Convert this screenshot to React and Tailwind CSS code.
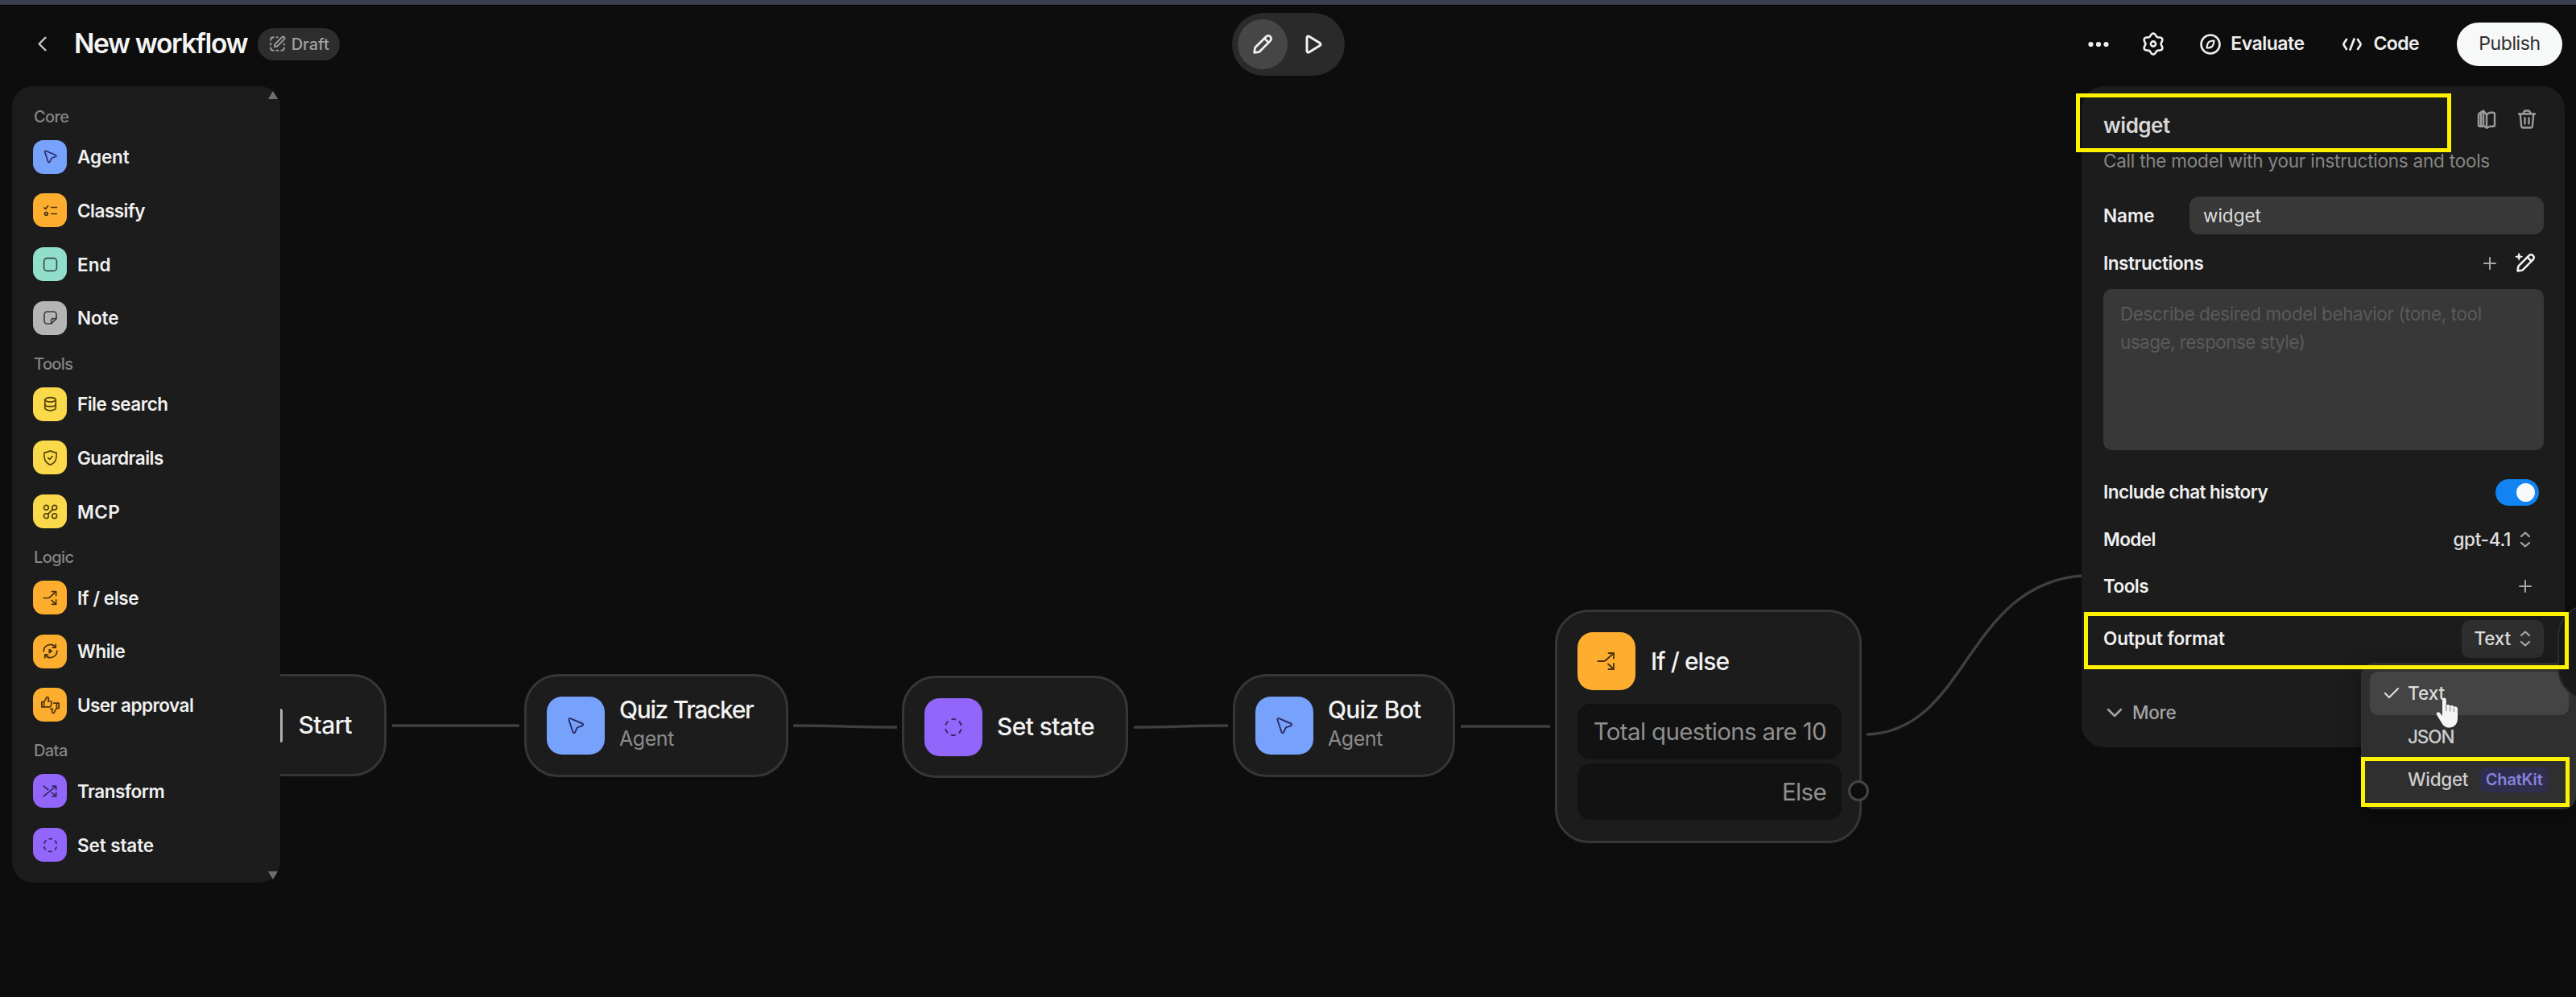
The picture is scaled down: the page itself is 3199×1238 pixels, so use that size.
import React from "react";
import { ChevronLeft, ChevronDown, Check, Plus } from "lucide-react";

const PATHS = {
  agent: <path d="M3.4 4.8c-.3-1.1.8-2.1 1.9-1.6l15 6.3c1.2.5 1.1 2.2-.1 2.6l-5.6 2c-.5.2-1 .6-1.2 1.1l-2.3 5.2c-.5 1.1-2.1 1-2.5-.2z" />,
  classify: (
    <>
      <path d="M2.5 7.5l2 2 4-5" />
      <circle cx="5.5" cy="17" r="2.4" />
      <path d="M13.5 7h8.5M13.5 17h8.5" />
    </>
  ),
  end: <rect x="2" y="2" width="20" height="20" rx="5" />,
  note: (
    <>
      <path d="M13.5 21.500H7A4.500 4.500 0 0 1 2.500 17V7A4.500 4.500 0 0 1 7 2.500h10A4.500 4.500 0 0 1 21.500 7v6.500z" />
      <path d="M13.500 21v-4.500a3 3 0 0 1 3-3h5" />
    </>
  ),
  file: (
    <>
      <ellipse cx="12" cy="5.500" rx="8.500" ry="3.500" />
      <path d="M3.500 5.500v13c0 2 3.500 4 8.500 4s8.500-2 8.500-4v-13" />
      <path d="M3.500 12.500c0 2 3.500 3.500 8.500 3.500s8.500-1.500 8.500-3.500" />
    </>
  ),
  guard: (
    <>
      <path d="M12 1c3 1.800 6 2.400 9.500 3 .8 9-.5 15-9.500 19-9-4-10.300-10-9.500-19C6 3.400 9 2.800 12 1z" />
      <path d="M8.500 12l2.500 2.500 4.500-5" />
    </>
  ),
  mcp: (
    <>
      <circle cx="5.500" cy="5.500" r="3.700" />
      <circle cx="18.500" cy="5.500" r="3.700" />
      <circle cx="5.500" cy="18.500" r="3.700" />
      <circle cx="18.500" cy="18.500" r="3.700" />
      <path d="M8 16l8-8" />
    </>
  ),
  branch: (
    <>
      <path d="M1.500 12h6.500c1.500 0 2.500-.5 3.500-1.500L20.500 2.500" />
      <path d="M14.500 2h6.500v6.500" />
      <path d="M14 15.500l6.500 6M21 15v7h-6.500" />
    </>
  ),
  loop: (
    <>
      <path d="M1.500 12.500a10.500 10.500 0 0 1 18.500-7" />
      <path d="M20.500 1.500v5h-5" />
      <path d="M22.500 11.500a10.500 10.500 0 0 1-18.500 7" />
      <path d="M3.500 22.500v-5h5" />
      <path d="M10.500 9.500l3.500 2.500-3.500 2.500z" fill="currentColor" />
    </>
  ),
  approval: (
    <>
      <path d="M-1.500 7h3.500v8h-3.500zM2 7.500L6.500-.5c2.200-.3 3.200 1.200 2.800 3L8.500 6H12c1.500 0 2.300 1.200 2 2.500l-1 4.700c-.3 1.100-1.100 1.800-2.200 1.800H2" />
      <path d="M25.500 17H22V9h3.500zM22 16.500L17.500 24.500c-2.200.3-3.200-1.200-2.800-3l.8-3.500H12M17.500 9H22" />
    </>
  ),
  transform: (
    <>
      <path d="M1.500 20L20 4.500M15.500 4H21v5.500" />
      <path d="M1.500 4l7 5.500M14.500 14.500l6 5M21 14v6h-6" />
    </>
  ),
  state: <circle cx="12" cy="12" r="10" strokeDasharray="4.470 6" strokeDashoffset="2.230" transform="rotate(-90 12 12)" />,
};

function Glyph({ name, className, sw = 2.1 }) {
  return (
    <svg viewBox="0 0 24 24" fill="none" stroke="currentColor" strokeWidth={sw} strokeLinecap="round" strokeLinejoin="round" className={"overflow-visible " + className}>
      {PATHS[name]}
    </svg>
  );
}

/* Six-lobed gear outline */
const GEAR = Array.from({ length: 72 }, (_, i) => {
  const a = (i / 72) * Math.PI * 2;
  const r = 11.4 + 1.6 * Math.cos(6 * a);
  return `${i ? "L" : "M"}${(13 + r * 0.98 * Math.sin(a)).toFixed(2)} ${(14.5 - r * Math.cos(a)).toFixed(2)}`;
}).join("") + "z";

const SHORT = "tracking-[-0.1px]";
const LONG = "tracking-[-0.5px]";

const GROUPS = [
  {
    title: "Core",
    items: [
      ["Agent", "agent", "bg-[#76a2fc] text-[#2c2a63]", SHORT],
      ["Classify", "classify", "bg-[#fdae2f] text-[#4a330c]", LONG],
      ["End", "end", "bg-[#91dfcb] text-[#3c4a4a]", "tracking-[0.1px]"],
      ["Note", "note", "bg-[#b5b5b5] text-[#3d3d3d]", SHORT],
    ],
  },
  {
    title: "Tools",
    items: [
      ["File search", "file", "bg-[#fada4b] text-[#57430b]", LONG],
      ["Guardrails", "guard", "bg-[#fada4b] text-[#57430b]", LONG],
      ["MCP", "mcp", "bg-[#fada4b] text-[#57430b]", "tracking-[0.4px]"],
    ],
  },
  {
    title: "Logic",
    items: [
      ["If / else", "branch", "bg-[#fdae2f] text-[#4a330c]", "tracking-[-0.4px]"],
      ["While", "loop", "bg-[#fdae2f] text-[#4a330c]", LONG],
      ["User approval", "approval", "bg-[#fdae2f] text-[#4a330c]", "tracking-[-0.55px]"],
    ],
  },
  {
    title: "Data",
    items: [
      ["Transform", "transform", "bg-[#9265fb] text-[#2f2a5c]", LONG],
      ["Set state", "state", "bg-[#9265fb] text-[#2f2a5c]", SHORT],
    ],
  },
];

function Sidebar() {
  return (
    <aside className="relative z-10 h-[989px] w-[333px] rounded-[26px] bg-[#1c1c1c] pt-[14px] pl-[26px]">
      {GROUPS.map((g) => (
        <section key={g.title}>
          <h2 className="flex h-[40.3px] items-center pt-[7px] pl-[1px] text-[20px] font-medium tracking-[-0.6px] text-[#858585]">{g.title}</h2>
          {g.items.map(([label, icon, tone, track]) => (
            <div key={label} className="flex h-[66.7px] items-center gap-[13px]">
              <span className={"flex size-[42px] items-center justify-center rounded-[13px] " + tone}>
                <Glyph name={icon} className="size-[19px]" />
              </span>
              <span className={"pt-[1px] text-[22.5px] font-semibold text-[#f0f0f0] " + track}>{label}</span>
            </div>
          ))}
        </section>
      ))}
      <svg className="absolute top-[6px] right-[3px] h-[10px] w-[12px] fill-[#6d6d6d]" viewBox="0 0 12 10"><path d="M6 0l6 10H0z" /></svg>
      <svg className="absolute right-[3px] bottom-[4px] h-[10px] w-[12px] fill-[#6d6d6d]" viewBox="0 0 12 10"><path d="M6 10l6-10H0z" /></svg>
    </aside>
  );
}

function PencilIcon({ className, sparkle }) {
  return (
    <svg viewBox="0 0 24 24" fill="none" stroke="currentColor" strokeWidth="2.5" strokeLinecap="round" strokeLinejoin="round" className={className}>
      <path d="M2.5 21.5l.6-4.8c.1-.6.4-1.1.8-1.5L16 3.2a3.3 3.3 0 0 1 4.8 4.8L8.8 20.1c-.4.4-.9.7-1.500.8z" />
      <path d="M14 5.200l4.800 4.800" />
      {sparkle && <path d="M4 .5l1 3 3 1-3 1-1 3-1-3-3-1 3-1z" fill="currentColor" strokeWidth="1" />}
    </svg>
  );
}

function Header() {
  return (
    <header className="relative z-10 grid h-[94px] grid-cols-[1fr_auto_1fr] items-center px-[17px] pt-[1px]">
      <div className="ml-[20px] flex items-center">
        <ChevronLeft className="h-[33px] w-[31px] text-[#c9c9c9]" strokeWidth={1.9} />
        <h1 className="ml-[24px] text-[33.5px] font-semibold tracking-[-1.4px] text-[#f4f4f4]">New workflow</h1>
        <span className="ml-[13px] flex h-[40px] w-[102px] items-center justify-center gap-[7px] rounded-full bg-[#2d2d2d] text-[20px] font-medium text-[#a0a0a0]">
          <svg viewBox="0 0 24 24" fill="none" stroke="currentColor" strokeWidth="2.2" strokeLinecap="round" strokeLinejoin="round" className="size-[21px]">
            <path d="M12 2.500h-1M6.500 2.500c-2.500 0-4 1.500-4 4M2.500 11v2M2.500 17.500c0 2.500 1.500 4 4 4M11 21.500h2M17.500 21.500c2.500 0 4-1.500 4-4M21.500 13v-1" />
            <path d="M8 16l.5-3.500L18.500 2.500a2.100 2.100 0 0 1 3 3L11.500 15.500z" />
          </svg>
          Draft
        </span>
      </div>
      <div className="flex h-[78px] w-[140px] items-center rounded-full bg-[#2a2a2a] px-[7px]">
        <span className="flex size-[62px] items-center justify-center rounded-full bg-[#464646] text-[#f2f2f2]"><PencilIcon className="size-[26px]" /></span>
        <span className="flex size-[62px] items-center justify-center text-[#f2f2f2]">
          <svg viewBox="0 0 24 24" fill="none" stroke="currentColor" strokeWidth="3" strokeLinejoin="round" className="ml-[3px] size-[24px]">
            <path d="M4 3.800v16.400c0 1.500 1.500 2.300 2.800 1.500l13.400-8.200c1.200-.7 1.200-2.300 0-3L6.800 2.300C5.500 1.500 4 2.300 4 3.800z" />
          </svg>
        </span>
      </div>
      <div className="flex items-center justify-end text-[23px] font-semibold tracking-[-0.5px] text-[#eee]">
        <svg viewBox="0 0 26 8" className="w-[26px] fill-current"><circle cx="3.500" cy="4" r="3.100" /><circle cx="13" cy="4" r="3.100" /><circle cx="22.500" cy="4" r="3.100" /></svg>
        <svg viewBox="0 0 26 29" fill="none" stroke="currentColor" strokeWidth="2.6" strokeLinejoin="round" className="ml-[42px] h-[29px] w-[26px] overflow-visible">
          <path d={GEAR} />
          <circle cx="13" cy="14.500" r="3.100" />
        </svg>
        <svg viewBox="0 0 26 26" fill="none" stroke="currentColor" strokeWidth="2.6" strokeLinejoin="round" className="ml-[45px] size-[26px]">
          <circle cx="13" cy="13" r="11.500" />
          <path d="M17.500 8.500c-3.600-.1-5.800.7-7 2.200-.9 1.300-1.800 3.500-2 6.800 3.600.1 5.800-.7 7-2.200.9-1.300 1.800-3.500 2-6.800z" strokeWidth="2.200" />
        </svg>
        <span className="ml-[12px]">Evaluate</span>
        <svg viewBox="0 0 26 18" fill="none" stroke="currentColor" strokeWidth="2.7" strokeLinecap="round" strokeLinejoin="round" className="ml-[47px] w-[26px]">
          <path d="M6 3L2.800 7.800c-.5.800-.5 1.600 0 2.400L6 15M20 3l3.200 4.800c.5.800.5 1.600 0 2.400L20 15M15.500 2.500l-5 13" />
        </svg>
        <span className="ml-[13px] tracking-[-0.6px]">Code</span>
        <button className="ml-[47px] flex h-[54px] w-[131px] items-center justify-center rounded-full bg-[#f7f8f8] font-normal tracking-[-0.4px] text-[#2f2f2f]">Publish</button>
      </div>
    </header>
  );
}

/* Workflow canvas: nodes and their connections */
function Node({ box, children, className = "" }) {
  return <div className={"absolute flex border-[3px] border-[#363636] bg-[#1c1c1c] " + box + " " + className}>{children}</div>;
}

function NodeIcon({ name, tone }) {
  return (
    <span className={"flex size-[72px] shrink-0 items-center justify-center rounded-[19px] " + tone}>
      <Glyph name={name} className="size-[24px]" sw={1.9} />
    </span>
  );
}

function AgentNode({ box, title, track }) {
  return (
    <Node box={box} className="items-center rounded-[42px] pl-[25px]">
      <NodeIcon name="agent" tone="bg-[#76a2fc] text-[#2c2a63]" />
      <div className="ml-[18px] flex flex-col pb-[2px]">
        <span className={"text-[30px] leading-[35px] font-medium text-[#f2f2f2] " + track}>{title}</span>
        <span className="text-[25px] leading-[37px] tracking-[-0.45px] text-[#8a8a8a]">Agent</span>
      </div>
    </Node>
  );
}

function Canvas() {
  return (
    <div className="absolute inset-0 overflow-hidden">
      <svg className="absolute inset-0 h-full w-full" fill="none" stroke="#3f3f3f" strokeWidth="3.5">
        <path d="M487 901H645M985 901C1040 901 1058 903 1114 903M1408 903C1460 903 1474 901 1525 901M1814 902H1925" />
        <path d="M2318 912C2446 908 2440 722 2590 714.500" />
      </svg>
      <Node box="top-[837px] left-[220px] h-[127px] w-[260px]" className="items-center justify-end rounded-[42px] pr-[40px]">
        <span className="mr-[19px] h-[42px] w-[31px] rounded-[3px] border-[3px] border-[#b0b0b0]" />
        <span className="text-[30px] font-medium tracking-[-0.5px] text-[#f2f2f2]">Start</span>
      </Node>
      <AgentNode box="top-[837px] left-[651px] h-[128px] w-[328px]" title="Quiz Tracker" track="tracking-[-1.35px]" />
      <Node box="top-[839px] left-[1120px] h-[127px] w-[281px]" className="items-center rounded-[42px] pl-[25px]">
        <NodeIcon name="state" tone="bg-[#9265fb] text-[#2f2a5c]" />
        <span className="ml-[18px] text-[30px] font-medium tracking-[-0.6px] text-[#f2f2f2]">Set state</span>
      </Node>
      <AgentNode box="top-[837px] left-[1531px] h-[128px] w-[276px]" title="Quiz Bot" track="tracking-[-0.75px]" />
      <Node box="top-[757px] left-[1931px] h-[290px] w-[381px]" className="flex-col rounded-[42px] px-[25px] pt-[25px]">
        <div className="flex items-center">
          <NodeIcon name="branch" tone="bg-[#fdae2f] text-[#4a330c]" />
          <span className="ml-[19px] text-[30px] font-medium tracking-[-0.95px] text-[#f2f2f2]">If / else</span>
        </div>
        <div className="-mr-[3px] mt-[17px] flex h-[69px] items-center justify-end rounded-[16px] bg-[#121212] pr-[19px] text-[29.5px] tracking-[-0.65px] text-[#8f8f8f]">Total questions are 10</div>
        <div className="-mr-[3px] mt-[5px] flex h-[70px] items-center justify-end rounded-[16px] bg-[#121212] pr-[19px] text-[29.5px] tracking-[-0.65px] text-[#8f8f8f]">Else</div>
        <span className="absolute top-[209px] -right-[12px] size-[26px] rounded-full border-[3px] border-[#444] bg-[#0d0d0d]" />
      </Node>
    </div>
  );
}

function UpDown() {
  return (
    <svg viewBox="0 0 14 20" fill="none" stroke="#a6a6a6" strokeWidth="2.3" strokeLinecap="round" strokeLinejoin="round" className="h-[20px] w-[14px]">
      <path d="M2 6l5-4.500L12 6M2 14l5 4.500L12 14" />
    </svg>
  );
}

function Label({ children, track = "tracking-[-0.55px]" }) {
  return <span className={"font-semibold text-[#f0f0f0] " + track}>{children}</span>;
}

function Row({ label, children }) {
  return (
    <div className="flex h-[58.5px] items-center justify-between pr-[16px]">
      <Label>{label}</Label>
      {children}
    </div>
  );
}

function Inspector() {
  return (
    <aside className="relative z-10 h-[821px] w-[600px] rounded-[28px] bg-[#1c1c1c] pr-[26px] pl-[27px] text-[22.5px]">
      <div className="flex h-[74px] items-start justify-between pr-[9px]">
        <h2 className="mt-[34px] text-[26px] leading-[30px] font-semibold tracking-[-0.5px] text-[#d8d8d8]">widget</h2>
        <div className="mt-[28px] flex items-center gap-[26px] text-[#9c9c9c]">
          <svg viewBox="0 0 24 26" fill="none" stroke="currentColor" strokeWidth="2.4" strokeLinejoin="round" className="h-[26px] w-[24px]">
            <path d="M8 2.500v18.500l4 2.800V7.500zM8 2.500L3.800 5C2.500 5.700 2 6.300 2 7.500v12.500c0 1.200.8 2 2 2h4M5 5v16.500M12 7.500l2.500-2c.8-.5 1.500-.8 2.500-.8h2.500c1.500 0 2.500.8 2.500 2.300v13c0 1.300-.8 2-2.200 2H16l-4 1.800" />
          </svg>
          <svg viewBox="0 0 24 26" fill="none" stroke="currentColor" strokeWidth="2.4" strokeLinecap="round" strokeLinejoin="round" className="h-[26px] w-[24px]">
            <path d="M2 6.500h20M7.500 6l1-2.500c.3-.7.700-1 1.500-1h4c.8 0 1.200.3 1.500 1l1 2.500M3.800 7l1.300 14.500c.1 1.300.9 2 2.200 2h9.400c1.300 0 2.100-.7 2.200-2L20.200 7M9.500 11.500v7M14.500 11.500v7" />
          </svg>
        </div>
      </div>
      <p className="h-[38px] leading-[37px] tracking-[-0.23px] text-[#868686]">Call the model with your instructions and tools</p>
      <div className="mt-[25px] flex h-[47px] items-center justify-between">
        <Label track="tracking-normal">Name</Label>
        <div className="flex h-full w-[440px] items-center rounded-[12px] bg-[#383838] pl-[17px] text-[#dcdcdc]">widget</div>
      </div>
      <div className="flex h-[68px] items-center justify-between pt-[3px] pr-[10px]">
        <Label track="tracking-[-0.45px]">Instructions</Label>
        <div className="flex items-center gap-[20px]">
          <Plus className="size-[24px] text-[#a6a6a6]" strokeWidth={2} />
          <PencilIcon sparkle className="size-[25px] overflow-visible text-[#f2f2f2]" />
        </div>
      </div>
      <div className="h-[200px] rounded-[10px] bg-[#383838] pt-[14px] pl-[21px] leading-[34.5px] text-[#5a5a5a]">
        <p className="tracking-[-0.39px]">Describe desired model behavior (tone, tool</p>
        <p className="tracking-[-0.55px]">usage, response style)</p>
      </div>
      <div className="mt-[23px]">
        <Row label="Include chat history">
          <span className="-mr-[10px] flex h-[33px] w-[54px] items-center justify-end rounded-full bg-[#1183f3] pr-[5px]"><span className="size-[23px] rounded-full bg-[#f7f9fa]" /></span>
        </Row>
        <Row label="Model">
          <span className="flex items-center gap-[11px] text-[#e0e0e0]"><span className="font-medium tracking-[-0.3px]">gpt-4.1</span><UpDown /></span>
        </Row>
        <Row label="Tools">
          <Plus className="-mr-[5px] size-[24px] text-[#a6a6a6]" strokeWidth={2} />
        </Row>
      </div>
      <div className="flex h-[71px] items-center justify-between">
        <Label track="tracking-[-0.15px]">Output format</Label>
        <span className="flex h-[47px] w-[102px] items-center justify-end gap-[11px] rounded-[10px] bg-[#2e2e2e] pr-[16px] text-[#dcdcdc]"><span className="font-medium tracking-[-0.2px]">Text</span><UpDown /></span>
      </div>
      <div className="mt-[16px] flex h-[80px] items-center text-[#a4a4a4]">
        <ChevronDown className="-ml-[2px] h-[32px] w-[32px]" strokeWidth={1.9} />
        <span className="ml-[6px] font-medium tracking-[-0.3px]">More</span>
      </div>
    </aside>
  );
}

function Dropdown() {
  return (
    <div className="absolute top-[823px] left-[2932px] z-20 h-[182px] w-[267px] rounded-[16px] bg-[#2f2f2f] p-[11px] pr-[9px] text-[22.5px] font-medium text-[#cdcdcd] shadow-[0_6px_24px_rgba(0,0,0,0.35)]">
      <div className="flex h-[54px] items-center rounded-[10px] bg-[#444] pl-[15px] text-[#dcdcdc]">
        <Check className="size-[24px]" strokeWidth={2.2} />
        <span className="ml-[8px]">Text</span>
      </div>
      <div className="flex h-[53px] items-center pl-[47px] tracking-[-1.1px]">JSON</div>
      <div className="flex h-[54px] items-center pl-[47px]">
        <span className="tracking-[-0.3px]">Widget</span>
        <span className="ml-[14px] flex h-[31px] w-[86px] items-center justify-center rounded-[8px] bg-[#2f2e4c] text-[20px] font-semibold tracking-[-0.2px] text-[#8682dc]">ChatKit</span>
      </div>
    </div>
  );
}

function HandCursor() {
  return (
    <svg viewBox="0 0 28 38" className="absolute top-[866px] left-[3025px] z-40 h-[38px] w-[28px] fill-[#f4f5f5]">
      <path d="M8 3c0-3.500 4.800-3.500 4.800 0v7.500c.5-2 4.500-2 4.800.5.700-1.600 4.500-1.300 4.800 1 .8-1.300 4.600-1 4.600 2.500V26c0 7-4 11.500-10.500 11.500-5 0-7.500-2.500-10-7L1 21.500c-1.200-2.700 2-4.500 4-2.200L8 23z" />
      <path d="M12.800 10v7M17.600 11.500v6M22.400 13v5" stroke="#8a8a8a" strokeWidth="1.200" fill="none" />
    </svg>
  );
}

export default function App() {
  return (
    <div className="relative h-[1238px] w-[3199px] overflow-hidden bg-[#0d0d0d] font-['Inter',sans-serif]">
      <div className="h-[7px] border-b border-black bg-[#3b404e]" />
      <Canvas />
      <Header />
      <main className="flex items-start justify-between pt-[6px] pr-[14px] pl-[15px]">
        <Sidebar />
        <Inspector />
      </main>
      <Dropdown />
      <div className="absolute top-[750px] left-[3176px] z-20 h-[120px] w-[80px] rounded-[40px] border-2 border-[#2c2c2c] bg-[#191919]" />
      <div className="absolute top-[116px] left-[2578px] z-30 h-[73px] w-[466px] border-5 border-[#fff200]" />
      <div className="absolute top-[760px] left-[2588px] z-30 h-[71px] w-[602px] border-5 border-[#fff200]" />
      <div className="absolute top-[940px] left-[2932px] z-30 h-[62px] w-[259px] border-5 border-[#fff200]" />
      <HandCursor />
    </div>
  );
}
